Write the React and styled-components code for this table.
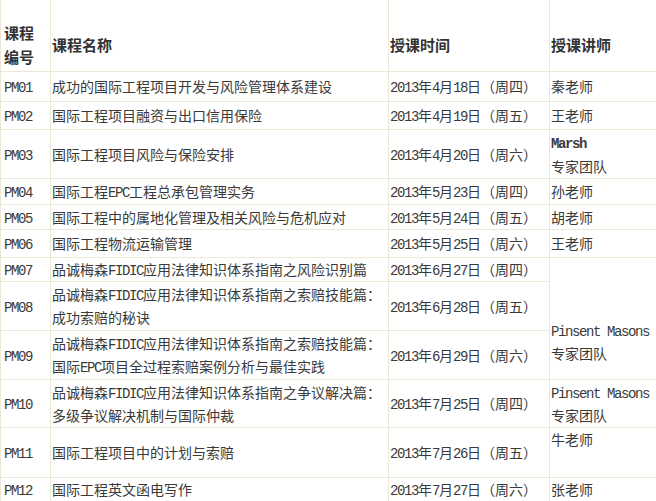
import React from "react";
import styled, { createGlobalStyle } from "styled-components";

const GlobalStyle = createGlobalStyle`
  html, body {
    margin: 0;
    padding: 0;
    background: #fff;
    overflow: hidden;
  }
  body {
    font-family: "Noto Sans CJK SC", "Liberation Sans", sans-serif;
    color: #3a3a3a;
  }
`;

const rows = [
  { code: "PM01", title: ["成功的国际工程项目开发与风险管理体系建设"], date: "2013年4月18日（周四）", teacher: { lines: ["秦老师"] }, h: 30 },
  { code: "PM02", title: ["国际工程项目融资与出口信用保险"], date: "2013年4月19日（周五）", teacher: { lines: ["王老师"] }, h: 28 },
  { code: "PM03", title: ["国际工程项目风险与保险安排"], date: "2013年4月20日（周六）", teacher: { lines: ["Marsh", "专家团队"], boldFirst: true }, h: 48 },
  { code: "PM04", title: ["国际工程EPC工程总承包管理实务"], date: "2013年5月23日（周四）", teacher: { lines: ["孙老师"] }, h: 26 },
  { code: "PM05", title: ["国际工程中的属地化管理及相关风险与危机应对"], date: "2013年5月24日（周五）", teacher: { lines: ["胡老师"] }, h: 25 },
  { code: "PM06", title: ["国际工程物流运输管理"], date: "2013年5月25日（周六）", teacher: { lines: ["王老师"] }, h: 28 },
  { code: "PM07", title: ["品诚梅森FIDIC应用法律知识体系指南之风险识别篇"], date: "2013年6月27日（周四）", teacher: { lines: ["Pinsent Masons", "专家团队"], span: 3, top: 61 }, h: 24 },
  { code: "PM08", title: ["品诚梅森FIDIC应用法律知识体系指南之索赔技能篇：", "成功索赔的秘诀"], date: "2013年6月28日（周五）", teacher: null, h: 49 },
  { code: "PM09", title: ["品诚梅森FIDIC应用法律知识体系指南之索赔技能篇：", "国际EPC项目全过程索赔案例分析与最佳实践"], date: "2013年6月29日（周六）", teacher: null, h: 49 },
  { code: "PM10", title: ["品诚梅森FIDIC应用法律知识体系指南之争议解决篇：", "多级争议解决机制与国际仲裁"], date: "2013年7月25日（周四）", teacher: { lines: ["Pinsent Masons", "专家团队"] }, h: 48 },
  { code: "PM11", title: ["国际工程项目中的计划与索赔"], date: "2013年7月26日（周五）", teacher: { lines: ["牛老师"], top: 0 }, h: 50 },
  { code: "PM12", title: ["国际工程英文函电写作"], date: "2013年7月27日（周六）", teacher: { lines: ["张老师"] }, h: 22 },
];

// wrap the half-width (ASCII) runs so they get the narrow mono look
const mixed = (text) =>
  text.split(/([\x20-\x7E]+)/).map((part, i) =>
    /^[\x20-\x7E]+$/.test(part) ? <Latin key={i}>{part}</Latin> : part
  );

export default function App() {
  return (
    <>
      <GlobalStyle />
      <Table>
        <colgroup>
          <Col $w={50} />
          <Col $w={338} />
          <Col $w={161} />
          <Col $w={171} />
        </colgroup>
        <thead>
          <tr>
            <HeadCell $pl={3}>
              课程
              <br />
              编号
            </HeadCell>
            <HeadCell>课程名称</HeadCell>
            <HeadCell>授课时间</HeadCell>
            <HeadCell>授课讲师</HeadCell>
          </tr>
        </thead>
        <tbody>
          {rows.map((r) => (
            <tr key={r.code}>
              <Cell $h={r.h} $pl={3}>
                <Line>
                  <Latin>{r.code}</Latin>
                </Line>
              </Cell>
              <Cell $h={r.h}>
                {r.title.map((line, i) => (
                  <Line key={i}>{mixed(line)}</Line>
                ))}
              </Cell>
              <Cell $h={r.h}>
                <Line>{mixed(r.date)}</Line>
              </Cell>
              {r.teacher && (
                <Cell
                  $h={r.h}
                  rowSpan={r.teacher.span || 1}
                  $top={r.teacher.top}
                >
                  {r.teacher.lines.map((line, i) =>
                    r.teacher.boldFirst && i === 0 ? (
                      <Line key={i} $gap={25}>
                        <Latin $bold>{line}</Latin>
                      </Line>
                    ) : (
                      <Line key={i}>{mixed(line)}</Line>
                    )
                  )}
                </Cell>
              )}
            </tr>
          ))}
        </tbody>
      </Table>
    </>
  );
}

const Table = styled.table`
  border-collapse: collapse;
  table-layout: fixed;
  width: 720px;
  font-size: 14px;
  line-height: 23px;
  color: #3a3a3a;
`;

const Col = styled.col`
  width: ${(p) => p.$w}px;
`;

const HeadCell = styled.th`
  height: 53px;
  padding: 18px 0 0 ${(p) => (p.$pl != null ? p.$pl : 1)}px;
  border: 1px solid #ebe8d8;
  border-top: none;
  text-align: left;
  vertical-align: middle;
  font-size: 15px;
  font-weight: bold;
  line-height: 24px;
  color: #333;
`;

const Cell = styled.td`
  height: ${(p) => p.$h - 1}px;
  padding: ${(p) => (p.$top != null ? `${p.$top}px` : "0")} 0 0
    ${(p) => (p.$pl != null ? p.$pl : 1)}px;
  border: 1px solid #ebe8d8;
  vertical-align: ${(p) => (p.$top != null ? "top" : "middle")};
  white-space: nowrap;
  overflow: hidden;
`;

const Line = styled.div`
  height: ${(p) => p.$gap || 23}px;
  line-height: ${(p) => p.$gap || 23}px;
`;

const Latin = styled.span`
  font-family: "Liberation Mono", monospace;
  font-size: 14px;
  line-height: 1;
  letter-spacing: -1.4px;
  font-weight: ${(p) => (p.$bold ? "bold" : "normal")};
`;
